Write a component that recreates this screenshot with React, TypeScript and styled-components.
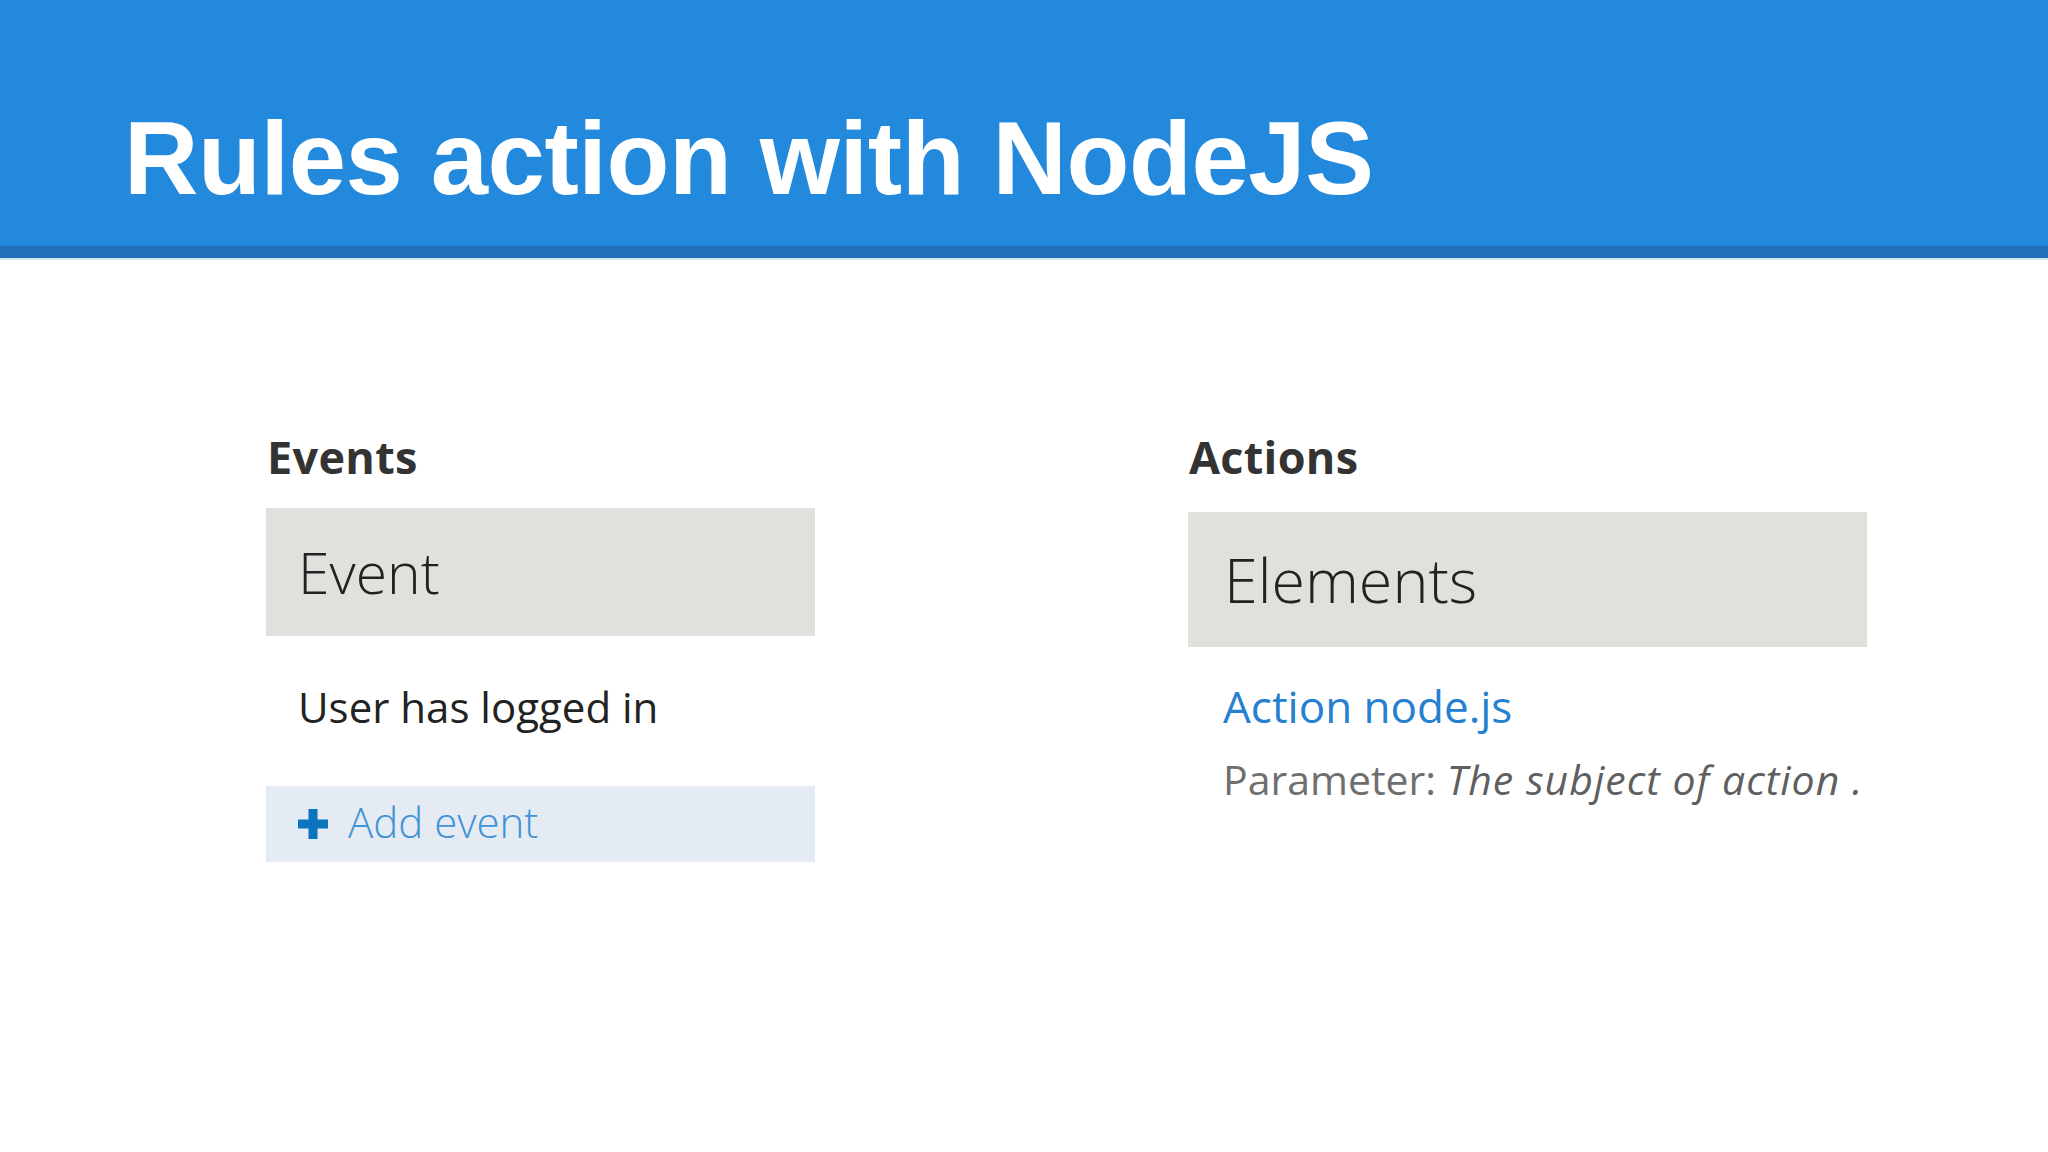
import styled, { createGlobalStyle } from "styled-components";

const GlobalStyle = createGlobalStyle`
  html, body {
    margin: 0;
    padding: 0;
    background: #ffffff;
  }
  body {
    font-family: "Open Sans", "Liberation Sans", sans-serif;
  }
`;

const Slide = styled.div`
  width: 2048px;
  height: 1152px;
  overflow: hidden;
  background: #ffffff;
  display: flex;
  flex-direction: column;
`;

// blue title band with the darker strip under it
const TitleBar = styled.header`
  height: 258px;
  box-sizing: border-box;
  padding: 107px 0 0 124px;
  background: #2389dc;
  border-bottom: 12px solid #1f6fb9;
  box-shadow: 0 2px 1px rgba(30, 110, 185, 0.18);
`;

const Title = styled.h1`
  margin: 0;
  font-family: "Liberation Sans", Arial, sans-serif;
  font-weight: 700;
  font-size: 103px;
  line-height: 104px;
  color: #ffffff;
  letter-spacing: -0.4px;
`;

const Columns = styled.main`
  display: flex;
  align-items: flex-start;
  padding: 171px 0 0 266px;
  gap: 373px;
`;

const Column = styled.section<{ $width: number }>`
  width: ${(p) => p.$width}px;
  display: flex;
  flex-direction: column;
`;

const Heading = styled.h2`
  margin: 0;
  padding-left: 1px;
  font-size: 45px;
  line-height: 56px;
  font-weight: 700;
  color: #333333;
  letter-spacing: 0.3px;
`;

const TableHead = styled.div<{ $height: number; $size: number; $gap: number; $pad: number }>`
  margin-top: ${(p) => p.$gap}px;
  height: ${(p) => p.$height}px;
  background: #e1e0dc;
  display: flex;
  align-items: center;
  padding-left: ${(p) => p.$pad}px;
  font-size: ${(p) => p.$size}px;
  line-height: 1;
  font-weight: 300;
  color: #222222;
`;

const EventRow = styled.div`
  margin-top: 43px;
  padding-left: 32px;
  font-size: 42px;
  line-height: 56px;
  color: #222222;
`;

const AddButton = styled.div`
  margin-top: 51px;
  height: 76px;
  box-sizing: border-box;
  padding: 0 0 4px 32px;
  background: #e4ebf2;
  display: flex;
  align-items: center;
  gap: 20px;
  font-size: 42px;
  line-height: 42px;
  font-weight: 300;
  color: #3f93d6;
`;

const PlusIcon = styled.svg`
  width: 30px;
  height: 30px;
  flex: none;
  margin-top: 4px;
`;

const ActionLink = styled.div`
  margin-top: 31px;
  padding-left: 35px;
  font-size: 44px;
  line-height: 56px;
  color: #2580d0;
`;

const ParamLine = styled.div`
  margin-top: 17px;
  padding-left: 35px;
  font-size: 41px;
  line-height: 56px;
  color: #6f6f6f;
  white-space: nowrap;
`;

const ParamValue = styled.em`
  font-style: italic;
  letter-spacing: 1px;
  color: #5f5f5f;
`;

export default function App() {
  return (
    <Slide>
      <GlobalStyle />
      <TitleBar>
        <Title>Rules action with NodeJS</Title>
      </TitleBar>
      <Columns>
        <Column $width={549}>
          <Heading>Events</Heading>
          <TableHead $height={128} $size={57} $gap={23} $pad={32}>
            Event
          </TableHead>
          <EventRow>User has logged in</EventRow>
          <AddButton>
            <PlusIcon viewBox="0 0 30 30">
              <path d="M10.5 0h9v10.5H30v9H19.5V30h-9V19.5H0v-9h10.5z" fill="#0a74c0" />
            </PlusIcon>
            <span>Add event</span>
          </AddButton>
        </Column>
        <Column $width={679}>
          <Heading>Actions</Heading>
          <TableHead $height={135} $size={61} $gap={27} $pad={36}>
            Elements
          </TableHead>
          <ActionLink>Action node.js</ActionLink>
          <ParamLine>
            Parameter: <ParamValue>The subject of action .</ParamValue>
          </ParamLine>
        </Column>
      </Columns>
    </Slide>
  );
}
